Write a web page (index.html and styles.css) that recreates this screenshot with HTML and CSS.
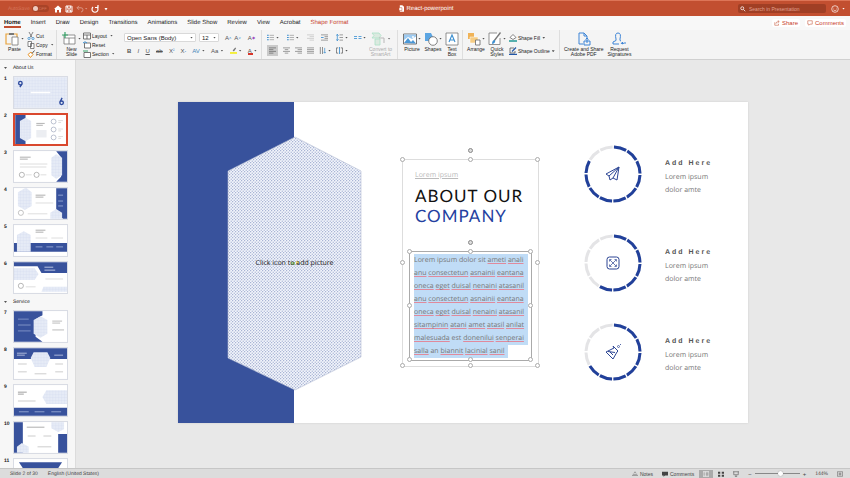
FILE: index.html
```html
<!DOCTYPE html>
<html lang="en">
<head>
<meta charset="utf-8">
<title>React-powerpoint</title>
<link rel="stylesheet" href="styles.css">
</head>
<body>
<svg class="defs" aria-hidden="true">
  <defs>
    <pattern id="dots" width="3" height="3" patternUnits="userSpaceOnUse"><rect width="3" height="3" fill="#f3f6fc"/><circle cx=".7" cy=".7" r=".6" fill="#8f9dc6"/><circle cx="2.2" cy="2.2" r=".6" fill="#8f9dc6"/></pattern>
    <pattern id="soft" width="3" height="3" patternUnits="userSpaceOnUse"><rect width="3" height="3" fill="#e6ebf6"/><path d="M0 0H3M0 0V3" stroke="#d2daec" stroke-width=".6"/></pattern>
    <symbol id="list" viewBox="0 0 8 8"><path d="M0 1.5h2M0 4h2M0 6.5h2" stroke="#3c8fd0" stroke-width="1.2"/><path d="M3 1.5h5M3 4h5M3 6.5h5" stroke="#888" stroke-width=".7"/></symbol>
    <symbol id="alignl" viewBox="0 0 8 8"><path d="M0 1h8M0 3h5M0 5h8M0 7h5" stroke="#666" stroke-width=".8"/></symbol>
    <symbol id="alignc" viewBox="0 0 8 8"><path d="M0 1h8M2 3h4M0 5h8M2 7h4" stroke="#777" stroke-width=".8"/></symbol>
    <symbol id="alignr" viewBox="0 0 8 8"><path d="M0 1h8M3 3h5M0 5h8M3 7h5" stroke="#777" stroke-width=".8"/></symbol>
    <symbol id="alignj" viewBox="0 0 8 8"><path d="M0 1h8M0 3h8M0 5h8M0 7h8" stroke="#777" stroke-width=".8"/></symbol>
  </defs>
</svg>

<header class="titlebar">
  <div class="quick">
    <label class="autosave"><span>AutoSave</span><span class="pill"><input type="checkbox" aria-label="AutoSave"><i>OFF</i></span></label>
    <button aria-label="Home"><svg viewBox="0 0 8 8"><path d="M0 4 4 .5 8 4H7v3.5H5V5H3v2.500H1V4z" fill="#fff"/></svg></button>
    <button aria-label="Save"><svg viewBox="0 0 8 8"><path d="M1 1h5.500L7 1.500V7H1zM2.300 1v2.200h3.400V1M2.300 7V5h3.400v2" fill="none" stroke="#fff"/></svg></button>
    <button aria-label="Undo" class="faint"><svg viewBox="0 0 8 8"><path d="M3 .8 1 2.800l2 2M1 2.800h4q2 0 2 2T5 7" fill="none" stroke="#fff"/></svg><b class="caret light"></b></button>
    <button aria-label="Redo"><svg viewBox="0 0 8 8"><path d="M2 2a3 3 0 1 0 4 0M4 2.500h3V0" fill="none" stroke="#fff" stroke-width="1.200"/></svg></button>
    <button aria-label="Customize toolbar"><svg viewBox="0 0 8 8"><path d="M2.500 3h3L4 5.500z" fill="#fff"/></svg></button>
  </div>
  <h1 class="doc"><svg viewBox="0 0 6 8"><path d="M1 0h3l2 2v6H1z" fill="#fff"/><path d="M0 3h3.500v3.500H0z" fill="#fff" stroke="#c24f30" stroke-width=".6"/></svg>React-powerpoint</h1>
  <div class="find">
    <label class="search"><svg viewBox="0 0 8 8"><circle cx="3" cy="3" r="2" fill="none" stroke="#fff"/><path d="m4.500 4.500 2.500 2.500" stroke="#fff"/></svg><input type="text" placeholder="Search in Presentation" aria-label="Search in Presentation"></label>
    <button aria-label="Feedback"><svg viewBox="0 0 8 8"><circle cx="4" cy="4" r="3.300" fill="none" stroke="#fff" stroke-width=".7"/><path d="M2.500 3.200h.6M5 3.200h.6M2.300 4.800q1.700 1.800 3.400 0" fill="none" stroke="#fff" stroke-width=".6"/></svg><b class="caret light"></b></button>
  </div>
</header>

<nav class="tabs">
  <a href="#" class="on">Home</a><a href="#">Insert</a><a href="#">Draw</a><a href="#">Design</a><a href="#">Transitions</a><a href="#">Animations</a><a href="#">Slide Show</a><a href="#">Review</a><a href="#">View</a><a href="#">Acrobat</a><a href="#" class="ctx">Shape Format</a>
  <div class="collab">
    <button><svg viewBox="0 0 8 8"><path d="M1 3v4h5V5M2.500 5q0-3 4-3M5 .5 7 2 5 3.800" fill="none" stroke="#c24f30" stroke-width=".7"/></svg>Share</button>
    <button><svg viewBox="0 0 8 8"><path d="M1 1h6v4.500H4L2.500 7V5.500H1z" fill="none" stroke="#c24f30" stroke-width=".7"/></svg>Comments</button>
  </div>
</nav>

<div class="ribbon">
  <section class="group clip">
    <button class="big"><span class="ico"><svg viewBox="0 0 14 14"><path d="M5 2H1v10h5M9 2h3v3" fill="none" stroke="#e8a33c" stroke-width="1.200"/><path d="M4 1h5v2H4z" fill="#777"/><path d="M7 5h6v8H7z" fill="#fff" stroke="#777" stroke-width=".8"/></svg><b class="caret"></b></span>Paste</button>
    <div class="stack">
      <button><svg viewBox="0 0 8 8"><path d="m2 0 3 5.500M6 0 3 5.500" stroke="#555" stroke-width=".7"/><circle cx="2" cy="6.500" r="1.100" fill="none" stroke="#3c8fd0" stroke-width=".8"/><circle cx="6" cy="6.500" r="1.100" fill="none" stroke="#3c8fd0" stroke-width=".8"/></svg>Cut</button>
      <button><svg viewBox="0 0 8 8"><path d="M1 .5h3.500v5H1zM3.500 2.500H7v5H3.500z" fill="#fff" stroke="#555" stroke-width=".7"/></svg>Copy<b class="caret"></b></button>
      <button><svg viewBox="0 0 8 8"><path d="M1 4.500 4 2l2 2.500L3.500 7.500z" fill="#fff" stroke="#e8962c"/><path d="m5 3.500 2.500-3" stroke="#555"/></svg>Format</button>
    </div>
  </section>
  <section class="group slides">
    <button class="big"><span class="ico"><svg viewBox="0 0 14 14"><path d="M2 3h11v9H2zM2 6h11M7 6v6" fill="#fff" stroke="#777" stroke-width=".8"/><path d="M3 0v6M0 3h6" stroke="#38a56a" stroke-width="1.200"/></svg><b class="caret"></b></span>New<br>Slide</button>
    <div class="stack">
      <button><svg viewBox="0 0 8 8"><path d="M.5 1h7v6h-7zM.5 3h7M4 3v4" fill="#fff" stroke="#555" stroke-width=".8"/></svg>Layout<b class="caret"></b></button>
      <button><svg viewBox="0 0 8 8"><path d="M1.500 2h6v5h-6z" fill="#fff" stroke="#555" stroke-width=".8"/><path d="M0 2q2-2.500 4 0" fill="none" stroke="#3c8fd0"/></svg>Reset</button>
      <button><svg viewBox="0 0 8 8"><path d="M1 2.500h6.500v5H1z" fill="#fff" stroke="#555" stroke-width=".8"/><path d="M0 1h5" stroke="#38a56a"/></svg>Section<b class="caret"></b></button>
    </div>
  </section>
  <section class="group font">
    <div class="row">
      <span class="pick family"><select aria-label="Font"><option>Open Sans (Body)</option></select><b class="caret"></b></span>
      <span class="pick size"><select aria-label="Font size"><option>12</option></select><b class="caret"></b></span>
      <button class="t" aria-label="Increase font size">A<sup>˄</sup></button><button class="t" aria-label="Decrease font size">A<sup>˅</sup></button>
      <button class="t last" aria-label="Clear formatting">A<i class="purple">◆</i></button>
    </div>
    <div class="row fmt">
      <button class="t"><strong>B</strong></button><button class="t"><em>I</em></button><button class="t"><u>U</u></button><button class="t"><s>ab</s></button><button class="t">X<sup>²</sup></button><button class="t">X<sub>₂</sub></button><button class="t blue">AV<b class="caret"></b></button><button class="t">Aa<b class="caret"></b></button>
      <button class="t" aria-label="Highlight"><svg viewBox="0 0 8 8"><path d="m3 4 3-3.500 1 1L4.500 5z" fill="#777"/><path d="M0 6.800h8" stroke="#f4ee2a" stroke-width="2"/></svg><b class="caret"></b></button><button class="t under">A<b class="caret"></b></button>
    </div>
  </section>
  <section class="group para">
    <div class="rows">
      <div class="row">
        <button aria-label="Bullets"><svg><use href="#list"/></svg><b class="caret"></b></button>
        <button aria-label="Numbering"><svg><use href="#list"/></svg><b class="caret"></b></button>
        <button class="faint" aria-label="Decrease indent"><svg><use href="#alignr"/></svg></button>
        <button aria-label="Increase indent"><svg viewBox="0 0 8 8"><path d="M0 1h8M4 3h4M4 5h4M0 7h8" stroke="#777" stroke-width=".8"/><path d="M0 4h3" stroke="#3c8fd0"/></svg></button>
        <button aria-label="Line spacing"><svg viewBox="0 0 8 8"><path d="M1.500 0v8M0 2 1.500.5 3 2M0 6l1.500 1.500L3 6" fill="none" stroke="#3c8fd0" stroke-width=".9"/><path d="M4 1h4M4 4h4M4 7h4" stroke="#777" stroke-width=".8"/></svg><b class="caret"></b></button>
      </div>
      <div class="row">
        <button class="active" aria-label="Align left"><svg><use href="#alignl"/></svg></button>
        <button aria-label="Center"><svg><use href="#alignc"/></svg></button>
        <button aria-label="Align right"><svg><use href="#alignr"/></svg></button>
        <button aria-label="Justify"><svg><use href="#alignj"/></svg></button>
        <button aria-label="Text direction"><svg viewBox="0 0 8 8"><path d="M1.500 0v8M4 0v8" stroke="#666" stroke-width=".8"/><path d="M6.500 1v6M5 5.500 6.500 7 8 5.500" fill="none" stroke="#3c8fd0" stroke-width=".8"/></svg><b class="caret"></b></button>
        <button aria-label="Align text"><svg viewBox="0 0 8 8"><path d="M2.500 1H.5v6h2M5.500 1h2v6h-2" fill="none" stroke="#555" stroke-width=".8"/><path d="M4 0v8" stroke="#3c8fd0"/></svg><b class="caret"></b></button>
      </div>
    </div>
    <button class="columns" aria-label="Columns"><svg viewBox="0 0 8 8"><path d="M0 2.500h3M0 4.500h3M4.500 2.500h3M4.500 4.500h3" stroke="#5da3da"/></svg><b class="caret"></b></button>
    <button class="big off"><span class="ico"><svg viewBox="0 0 14 14"><path d="M1 1h7l2 2.500L8 6H1l2-2.500zM4 7h5v6H4z" fill="#d6e8dc" stroke="#9db" stroke-width=".8"/><path d="M8 6h5v5" fill="none" stroke="#aaa"/></svg><b class="caret"></b></span>Convert to<br>SmartArt</button>
  </section>
  <section class="group insert">
    <button class="big"><span class="ico"><svg viewBox="0 0 14 14"><path d="M.5 2h13v10H.5z" fill="#fff" stroke="#555" stroke-width=".8"/><path d="m1 11 4-5 3 4 2-2 3 3.500z" fill="#4a97d6"/><path d="M1 2.500h12v2L9 7 5 5 1 8z" fill="#9dcaf0"/><circle cx="10" cy="5" r="1" fill="#fff"/></svg><b class="caret"></b></span>Picture</button>
    <button class="big"><span class="ico"><svg viewBox="0 0 14 14"><path d="M1 1h6l2 4-2 4H1z" fill="#5ba5e2"/><circle cx="9" cy="9" r="4.300" fill="#fff" stroke="#666" stroke-width=".8"/></svg><b class="caret"></b></span>Shapes</button>
    <button class="big"><span class="ico"><svg viewBox="0 0 14 14"><path d="M1 1h12v12H1z" fill="#fff" stroke="#666" stroke-width=".7"/><path d="m4 10 3-7 3 7M5 8h4" fill="none" stroke="#3c8fd0" stroke-width="1.100"/></svg></span>Text<br>Box</button>
  </section>
  <section class="group draw">
    <button class="big"><span class="ico"><svg viewBox="0 0 14 14"><path d="M1 1h6v6H1z" fill="#f0b357"/><path d="M3 5h8v6H3z" fill="#f6cd84" stroke="#fff" stroke-width=".5"/><path d="M8.500 8H13v5H8.500z" fill="#fff" stroke="#666" stroke-width=".8"/></svg><b class="caret"></b></span>Arrange</button>
    <button class="big"><span class="ico"><svg viewBox="0 0 14 14"><path d="M12 6v6.500H1V1h8" fill="#fff" stroke="#777" stroke-width=".8"/><path d="m6 9 6.500-8.500" stroke="#777" stroke-width="1.300"/><path d="M4 12q0-4 3-4 1 3-3 4" fill="#3c8fd0"/></svg><b class="caret"></b></span>Quick<br>Styles</button>
    <div class="stack two">
      <button><svg viewBox="0 0 8 8"><path d="m1 3.500 3-3 3 3-3 2z" fill="#fff" stroke="#555" stroke-width=".7"/><path d="M0 7h8" stroke="#2f9e9b" stroke-width="1.600"/></svg>Shape Fill<b class="caret"></b></button>
      <button><svg viewBox="0 0 8 8"><path d="M5 1H1v5h5V4" fill="none" stroke="#555" stroke-width=".8"/><path d="m3 4.500 4-4M0 7.300h8" stroke="#2357a8" stroke-width="1.200"/></svg>Shape Outline<b class="caret"></b></button>
    </div>
  </section>
  <section class="group adobe">
    <button class="big"><span class="ico"><svg viewBox="0 0 14 14"><path d="M6 12H2V1h5l3 3v3M7 1v3h3M7 9h6v4H7zM10 11V6M8.500 7.500 10 6l1.500 1.500" fill="none" stroke="#3d84d6"/></svg></span>Create and Share<br>Adobe PDF</button>
    <button class="big"><span class="ico"><svg viewBox="0 0 14 14"><path d="M1 12v-2l3-1.500V7Q2.500 1 6 1t2 6v1.500L9 9M1 12h6M9 12l1.500-2v2l1.500-1h2" fill="none" stroke="#3d84d6"/></svg></span>Request<br>Signatures</button>
  </section>
</div>

<main class="work">
  <aside class="panel">
    <h2><b class="caret"></b>About Us</h2>
    <ol>
      <li><svg viewBox="0 0 54 31"><rect width="54" height="31" fill="url(#soft)"/><path d="M17 15.500h20" stroke="#fff" stroke-width="1.500"/><circle cx="6.500" cy="6" r="1.800" fill="none" stroke="#2c4a9e" stroke-width="1.400"/><path d="M8 7 6 10" stroke="#2c4a9e" stroke-width="1.400"/><circle cx="48.500" cy="26" r="1.800" fill="none" stroke="#2c4a9e" stroke-width="1.400"/><path d="m47 25 2-4" stroke="#2c4a9e" stroke-width="1.400"/></svg></li>
      <li class="current"><svg viewBox="0 0 54 31"><rect width="54" height="31" fill="#fff"/><path d="M0 0h11v31H0z" fill="#38529c"/><path d="m11 3 6 3.500v18L11 28l-6-3.500v-18z" fill="url(#soft)"/><path d="M22.500 9h9M22.500 11h7" stroke="#999" stroke-width=".8"/><path d="M22.500 16h11v8h-11z" fill="#eceef2"/><g fill="none" stroke="#9aa3b8" stroke-width=".7"><circle cx="41" cy="7" r="2.600"/><circle cx="41" cy="15.500" r="2.600"/><circle cx="41" cy="24" r="2.600"/><path d="M46 6h5M46 8h3M46 15h5M46 17h3M46 23h5M46 25h3" stroke="#ccc"/></g></svg></li>
      <li><svg viewBox="0 0 54 31"><rect width="54" height="31" fill="#fff"/><path d="M43 0h11v31H43l5-5V6z" fill="#38529c"/><path d="m43 3 6 3.500v18L43 28l-5-3.500v-18z" fill="url(#soft)"/><path d="M6 6h11M6 8h8" stroke="#999" stroke-width=".8"/><path d="M6 13h28M6 16h27" stroke="#ddd"/><g fill="none" stroke="#999" stroke-width=".7"><circle cx="8" cy="24" r="2.600"/><circle cx="23" cy="24" r="2.600"/></g><path d="M12 24h6M27 24h6" stroke="#ddd"/></svg></li>
      <li><svg viewBox="0 0 54 31"><rect width="54" height="31" fill="#fff"/><path d="m4 4 7-4h2l5 4v14l-7 4-7-4z" fill="url(#soft)"/><path d="M43 0h11v31h-4l-7-6z" fill="#38529c"/><path d="m37 25 6-4 6 4v6H37z" fill="url(#soft)"/><path d="M22 7h10M22 9h8" stroke="#999" stroke-width=".8"/><path d="M22 15h18M14 26h20" stroke="#ddd"/><path d="M45 7h5M45 13h5M45 18h5" stroke="#8fa1d0"/><circle cx="7" cy="25" r="2.600" fill="none" stroke="#aaa" stroke-width=".7"/></svg></li>
      <li><svg viewBox="0 0 54 31"><rect width="54" height="31" fill="#fff"/><path d="M0 18h54v9H0z" fill="#38529c"/><path d="m3 10 7-4 7 4v17H3z" fill="url(#soft)"/><path d="M22 5h10M22 7h8" stroke="#999" stroke-width=".8"/><path d="M22 13h12M38 13h12" stroke="#ddd"/><path d="M22 22h7M33 22h7M43 22h7" stroke="#8fa1d0"/></svg></li>
      <li><svg viewBox="0 0 54 31"><rect width="54" height="31" fill="#fff"/><path d="M0 0h54v11H28l-4-7H0z" fill="#38529c"/><path d="M0 6h21l4 6-4 6H0z" fill="url(#soft)"/><path d="M30 25h24v5H28z" fill="url(#soft)"/><path d="M31 5h9M31 8h11" stroke="#dbe2f4" stroke-width=".8"/><path d="M32 17h18M12 25h10" stroke="#ddd"/><circle cx="7" cy="24" r="2.600" fill="none" stroke="#999" stroke-width=".7"/></svg></li>
    </ol>
    <h2><b class="caret"></b>Service</h2>
    <ol start="7">
      <li><svg viewBox="0 0 54 31"><rect width="54" height="31" fill="#fff"/><path d="M0 0h29v4l-7 4v18l7 5H0z" fill="#38529c"/><path d="m27 5 7 4v14l-7 4-7-4V9z" fill="url(#soft)"/><path d="M4 8h11M4 14h13M4 20h13" stroke="#8fa1d0" stroke-width=".8"/><path d="M39 10h10M39 12h8M39 19h12" stroke="#aaa" stroke-width=".8"/></svg></li>
      <li><svg viewBox="0 0 54 31"><rect width="54" height="31" fill="#fff"/><path d="M0 0h54v11H0z" fill="#38529c"/><path d="m17 10 3-6h14l3 6-4 9H21z" fill="url(#soft)"/><path d="M3 5h10M3 7h8M41 7h9" stroke="#c9d3ea" stroke-width=".8"/><path d="M4 16h9M4 24h9M21 26h12M42 16h8M42 24h8" stroke="#ccc"/></svg></li>
      <li><svg viewBox="0 0 54 31"><rect width="54" height="31" fill="#fff"/><path d="M0 23h54v8H0z" fill="#38529c"/><path d="m29 12 4-7h21v14H33z" fill="url(#soft)"/><path d="M4 7h9M4 9h6" stroke="#888" stroke-width=".8"/><path d="M4 16h18" stroke="#ccc"/><path d="M5 27h10M21 27h10M38 27h10" stroke="#8fa1d0"/></svg></li>
      <li><svg viewBox="0 0 54 31"><rect width="54" height="31" fill="#fff"/><path d="M0 0h9v31H0zM45 12h9v19h-9z" fill="#38529c"/><path d="m3 25 5-4 7 4v6H3zM38 0h13v7l-6 3-7-4z" fill="url(#soft)"/><path d="M13 5h18" stroke="#999" stroke-width=".8"/><path d="M14 14h8M30 14h8M24 25h14" stroke="#ccc"/></svg></li>
      <li><svg viewBox="0 0 54 31"><rect width="54" height="31" fill="#fff"/><path d="M5 3h44l-4 6H9z" fill="#38529c"/></svg></li>
    </ol>
  </aside>

  <div class="canvas">
    <article class="slide">
      <svg class="art" viewBox="0 0 570 321"><path d="M0 0h116v321H0z" fill="#38529c"/><path d="m117 35 66 34v186l-66 33-67-32V69z" fill="url(#dots)" stroke="#b5bdd4" stroke-width=".6"/><path d="M113 160h4v3h-4z" fill="#a6d48f"/><path d="M118 159h3v3h-3z" fill="#e9dc82"/></svg>
      <p class="hint">Click icon to add picture</p>
      <div class="frame outer">
        <i class="rot"></i><i class="h tl"></i><i class="h tc"></i><i class="h tr"></i><i class="h ml"></i><i class="h mr"></i><i class="h bl"></i><i class="h bc"></i><i class="h br"></i>
        <p class="lead">Lorem ipsum</p>
        <h3>ABOUT OUR<br><span>COMPANY</span></h3>
        <div class="frame inner">
          <i class="rot"></i><i class="h tl"></i><i class="h tc"></i><i class="h tr"></i><i class="h ml"></i><i class="h mr"></i><i class="h bl"></i><i class="h bc"></i><i class="h br"></i>
          <p class="copy"><span>Lorem ipsum dolor sit <u>ameti</u> <u>anali</u></span><span><u>anu</u> <u>consectetun</u> <u>asnainii</u> <u>eantana</u></span><span><u>oneca</u> <u>eget</u> <u>duisal</u> <u>nenaini</u> <u>atasanil</u></span><span><u>anu</u> <u>consectetun</u> <u>asnainii</u> <u>eantana</u></span><span><u>oneca</u> <u>eget</u> <u>duisal</u> <u>nenaini</u> <u>atasanil</u></span><span><u>sitampinin</u> <u>atani</u> <u>amet</u> <u>atasil</u> <u>anilat</u></span><span><u>malesuada</u> est <u>donenilui</u> <u>senperai</u></span><span class="end"><u>salla</u> an <u>biannit</u> <u>lacinial</u> <u>sanil</u></span></p>
        </div>
      </div>
      <div class="features">
        <section><svg viewBox="0 0 58 58"><g fill="none" stroke-width="3" transform="rotate(-88 29 29)"><circle cx="29" cy="29" r="27" pathLength="120" stroke="#e4e4e6" stroke-dasharray="9 1"/><circle cx="29" cy="29" r="27" pathLength="120" stroke="#21409a" stroke-dasharray="9 1 9 1 9 1 9 1 9 1 9 1 9 1 9 1 9 1 9 1 0 20"/></g><path d="m22 29 13-7-2 13-4-2-3 2-1-4zM35 22l-10 9M35 22l-6 11" fill="none" stroke="#2c4594" stroke-linejoin="round"/></svg><div><h4>Add Here</h4><p>Lorem ipsum<br>dolor amte</p></div></section>
        <section><svg viewBox="0 0 58 58"><g fill="none" stroke-width="3" transform="rotate(-88 29 29)"><circle cx="29" cy="29" r="27" pathLength="120" stroke="#e4e4e6" stroke-dasharray="9 1"/><circle cx="29" cy="29" r="27" pathLength="120" stroke="#21409a" stroke-dasharray="9 1 9 1 9 1 9 1 9 1 9 1 9 1 0 50"/></g><rect x="23" y="23" width="12" height="12" rx="2.500" fill="none" stroke="#2c4594"/><path d="m26 26 6 6M32 26l-6 6M25.500 27.500v-2h2M30.500 25.500h2v2M25.500 30.500v2h2M30.500 32.500h2v-2" fill="none" stroke="#2c4594" stroke-width=".7"/></svg><div><h4>Add Here</h4><p>Lorem ipsum<br>dolor amte</p></div></section>
        <section><svg viewBox="0 0 58 58"><g fill="none" stroke-width="3" transform="rotate(-88 29 29)"><circle cx="29" cy="29" r="27" pathLength="120" stroke="#e4e4e6" stroke-dasharray="9 1"/><circle cx="29" cy="29" r="27" pathLength="120" stroke="#21409a" stroke-dasharray="9 1 9 1 9 1 9 1 9 1 9 1 9 1 9 1 0 40"/></g><path d="m29 23 5 5-1 1-4 7-7-7 8-4zM24 28.500l7 1M26 29l3 3" fill="none" stroke="#2c4594" stroke-linejoin="round"/><circle cx="34.500" cy="23.500" r="1" fill="none" stroke="#2c4594" stroke-width=".7"/><path d="M36 21.500h.8" stroke="#2c4594"/></svg><div><h4>Add Here</h4><p>Lorem ipsum<br>dolor amte</p></div></section>
      </div>
    </article>
  </div>
</main>

<footer class="status">
  <span>Slide 2 of 30</span><span>English (United States)</span>
  <div class="views">
    <button><svg viewBox="0 0 8 8"><path d="M0 6h8M1 4.500h6M2.500 3 4 1l1.500 2" fill="none" stroke="#666" stroke-width=".7"/></svg>Notes</button>
    <button><svg viewBox="0 0 8 8"><path d="M0 1h8v5H4L2 7.500V6H0z" fill="#444"/></svg>Comments</button>
    <button class="view active" aria-label="Normal view"><svg viewBox="0 0 8 8"><path d="M0 1h8v6H0zM3 1v6" fill="none" stroke="#fff" stroke-width=".9"/></svg></button>
    <button class="view" aria-label="Slide sorter"><svg viewBox="0 0 8 8"><path d="M0 1h3v2.500H0zM5 1h3v2.500H5zM0 5h3v2.500H0zM5 5h3v2.500H5z" fill="#444"/></svg></button>
    <button class="view" aria-label="Slide show"><svg viewBox="0 0 8 8"><path d="M0 1h8M1 1v4h6V1M4 5v2M2.500 7.500h3" fill="none" stroke="#555" stroke-width=".8"/></svg></button>
    <div class="zoom"><button aria-label="Zoom out">−</button><input type="range" min="0" max="100" value="58" aria-label="Zoom"><button aria-label="Zoom in">+</button></div>
    <output>144%</output>
    <button class="fit" aria-label="Fit to window"><svg viewBox="0 0 8 8"><path d="M.5 1h7v6h-7z" fill="none" stroke="#555" stroke-width=".7"/><path d="M4 2v4M2 4h4" stroke="#555" stroke-width=".8"/></svg></button>
  </div>
</footer>
</body>
</html>
```

FILE: styles.css
```css
* { box-sizing: border-box; }
html, body { height: 100%; }
body {
  margin: 0;
  display: flex;
  flex-direction: column;
  overflow: hidden;
  background: #e8e8e8;
  color: #222;
  font: 5px/6px "Liberation Sans", sans-serif;
  text-rendering: geometricPrecision;
}
h1, h2, h3, h4, p, ol { margin: 0; padding: 0; font-weight: normal; }
button {
  border: 0;
  padding: 0;
  margin: 0;
  background: none;
  color: inherit;
  font: inherit;
  display: flex;
  align-items: center;
  white-space: nowrap;
}
svg { display: block; flex: none; width: 8px; height: 8px; }
.defs { position: absolute; width: 0; height: 0; }
.faint { opacity: .4; }
.caret {
  flex: none;
  width: 3px;
  height: 2px;
  margin-left: 3px;
  background: #555;
  clip-path: polygon(0 0, 100% 0, 50% 100%);
}
.caret.light { background: #fff; }

/* Title bar */
.titlebar {
  flex: none;
  display: grid;
  grid-template-columns: 1fr auto 1fr;
  align-items: center;
  height: 16px;
  padding: 0 5px 0 8px;
  border-top: 1px solid #dd7557;
  background: #c24f30;
  color: #fff;
}
.quick { display: flex; align-items: center; gap: 3px; }
.quick svg { width: 8px; height: 8px; }
.quick .caret { margin-left: 1px; }
.autosave { display: flex; align-items: center; gap: 2px; margin-right: 2px; color: #d5755a; }
.pill {
  display: flex;
  align-items: center;
  gap: 1px;
  width: 17px;
  height: 7px;
  padding: 0 1px;
  border-radius: 4px;
  background: #a94428;
}
.autosave input {
  appearance: none;
  width: 5px;
  height: 5px;
  margin: 0;
  border-radius: 50%;
  background: #eecabf;
}
.autosave i { font-style: normal; font-size: 4px; }
.doc { display: flex; align-items: center; gap: 2px; font-size: 6px; }
.doc svg { width: 5px; height: 7px; }
.find { display: flex; justify-content: flex-end; align-items: center; gap: 5px; }
.search {
  display: flex;
  align-items: center;
  gap: 3px;
  width: 88px;
  height: 9px;
  padding: 0 2px;
  border-radius: 2px;
  background: #a03f25;
}
.search svg { width: 6px; height: 6px; }
.search input {
  min-width: 0;
  flex: 1;
  border: 0;
  padding: 0;
  background: none;
  color: #fff;
  font: inherit;
}
.search input::placeholder { color: #e0a090; opacity: 1; }

/* Ribbon tabs */
.tabs {
  flex: none;
  display: flex;
  align-items: center;
  gap: 10px;
  height: 14px;
  padding: 0 4px;
  background: #f8f8f8;
  font-size: 6px;
}
.tabs a {
  padding: 2px 0 0;
  border-bottom: 2px solid transparent;
  color: #222;
  text-decoration: none;
}
.tabs .on { border-color: #c24f30; font-weight: bold; }
.tabs .ctx { color: #c8402a; }
.collab { display: flex; gap: 5px; margin-left: auto; color: #c8402a; }
.collab button { gap: 2px; padding: 1px 2px; border-radius: 2px; background: #fff; }
.collab svg { width: 6px; height: 6px; }

/* Ribbon */
.ribbon {
  flex: none;
  display: flex;
  height: 30px;
  border-bottom: 1px solid #d0d0d0;
  background: #f4f4f4;
}
.group { display: flex; flex: none; padding: 1px 0 1px 5px; }
.group + .group { border-left: 1px solid #dedede; }
.big { flex-direction: column; text-align: center; justify-content: flex-start; line-height: 5px; }
.big .ico { display: flex; align-items: center; height: 15px; margin-bottom: 1px; }
.big .ico svg { width: 14px; height: 14px; }
.off { color: #999; opacity: .8; }
.stack { display: flex; flex-direction: column; justify-content: space-around; margin-left: 4px; }
.stack button { gap: 1px; }
.row { display: flex; align-items: center; height: 13px; }
.clip { width: 56px; }
.clip .stack { margin-left: 3px; }
.slides { width: 63px; }
.slides .stack { margin-left: 2px; }
.slides .caret, .clip .caret { margin-left: 2px; }
.font { flex-direction: column; width: 142px; padding-left: 4px; }
.font.group { border-left-color: transparent; }
.pick {
  display: flex;
  align-items: center;
  height: 9px;
  margin-right: 3px;
  padding: 0 2px;
  border: 1px solid #d9d9d9;
  border-radius: 1px;
  background: #fff;
}
.pick select {
  appearance: none;
  min-width: 0;
  flex: 1;
  border: 0;
  padding: 0;
  background: none;
  color: #222;
  font: inherit;
  font-size: 6px;
}
.family { width: 72px; }
.size { width: 20px; }
.row .t { margin-left: 3px; font-size: 6px; color: #555; }
.row .t svg { width: 7px; height: 7px; }
.row .t .caret { margin-left: 2px; }
.row .last { margin-left: 7px; }
.fmt { justify-content: space-between; padding: 0 4px 0 0; }
.t sup, .t sub { font-size: 4px; line-height: 4px; color: #3c8fd0; }
.purple { color: #a050c0; font-size: 4px; font-style: normal; }
.row .blue { color: #4784b8; }
.under { position: relative; }
.under::before {
  content: "";
  position: absolute;
  left: 0;
  bottom: -1px;
  width: 5px;
  height: 2px;
  background: #d8362a;
}
.para { width: 136px; }
.rows { width: 81px; }
.rows .row { justify-content: space-between; }
.rows .caret { margin-left: 2px; }
.rows svg { width: 7px; height: 7px; }
.rows .active { padding: 2px; background: #cacaca; }
.columns { height: 13px; margin: 0 3px 0 6px; }
.columns .caret { margin-left: 1px; }
.insert { gap: 3px; width: 65px; }
.draw { gap: 3px; width: 97px; padding-left: 4px; }
.insert .caret, .draw .caret { margin-left: 1px; }
.draw .stack { margin-left: 0; }
.draw .stack button { gap: 1px; }
.adobe { gap: 4px; padding-left: 4px; }

/* Workspace */
.work { flex: 1; min-height: 0; display: flex; }
.panel {
  flex: none;
  width: 76px;
  overflow: hidden;
  padding-top: 3px;
  border-right: 1px solid #dcdcdc;
  background: #f7f7f7;
}
.panel h2 { display: flex; align-items: center; gap: 6px; height: 10px; padding-left: 1px; font-size: 5px; color: #222; }
.panel ol { list-style: none; padding: 3px 7px 3px 4px; display: grid; gap: 4px; counter-reset: n; }
.panel ol[start="7"] { counter-reset: n 6; }
.panel li { display: grid; grid-template-columns: 9px 56px; counter-increment: n; }
.panel li::before { content: counter(n); font-weight: bold; }
.panel li svg { width: 55px; height: 33px; border: 1px solid #d9dce4; }
.panel .current svg { border: 2px solid #d9482e; }
.canvas {
  flex: 1;
  display: flex;
  align-items: center;
  justify-content: center;
  padding-bottom: 4px;
}

/* Slide: objects sit freely on the artboard */
.slide {
  position: relative;
  flex: none;
  width: 570px;
  height: 321px;
  background: #fff;
  box-shadow: 0 0 2px #ccc;
  color: #777;
  font: 7px/13px "Open Sans", sans-serif;
}
.art { position: absolute; inset: 0; width: 100%; height: 100%; }
.hint { position: absolute; left: 50px; top: 155px; width: 133px; text-align: center; color: #222; }
.frame { position: absolute; border: 1px solid #ddd; }
.outer { left: 224px; top: 57px; width: 137px; height: 208px; padding: 9px 12px; }
.inner { left: 6px; top: 91px; width: 123px; height: 110px; padding: 2px 4px; border-color: #aaa; }
.h {
  position: absolute;
  width: 5px;
  height: 5px;
  margin: -3px;
  border: 1px solid #aaa;
  border-radius: 50%;
  background: #fff;
}
.tl, .ml, .bl { left: 0; }
.tc, .bc { left: 50%; }
.tr, .mr, .br { left: 100%; }
.tl, .tc, .tr { top: 0; }
.ml, .mr { top: 50%; }
.bl, .bc, .br { top: 100%; }
.rot {
  position: absolute;
  left: 50%;
  top: -12px;
  width: 5px;
  height: 5px;
  margin-left: -3px;
  border: 1px solid #888;
  border-radius: 50%;
  background: #ddd;
}
.lead { color: #bbb; text-decoration: underline; }
.slide h3 { margin-top: 4px; color: #111; font: 17px/20px Lato, sans-serif; letter-spacing: 1px; white-space: nowrap; }
.slide h3 span { color: #2541a0; }
.copy { white-space: nowrap; }
.copy span { display: block; width: 114px; background: #c0dcf6; }
.copy .end { width: 94px; }
.copy u { text-decoration: underline #e08a9c; text-underline-offset: 1px; text-decoration-skip-ink: none; }
.features { position: absolute; left: 406px; top: 43px; display: grid; gap: 31px; }
.features section { display: flex; align-items: center; gap: 23px; }
.features svg { width: 58px; height: 58px; }
.features h4 { color: #555; font: bold 7px/14px "Liberation Sans", sans-serif; letter-spacing: 2px; }
.features div { padding-top: 6px; }

/* Status bar */
.status {
  flex: none;
  display: flex;
  align-items: center;
  gap: 10px;
  height: 10px;
  padding: 0 7px 0 10px;
  border-top: 1px solid #c6c6c6;
  background: #dcdcdc;
  color: #444;
}
.views { display: flex; align-items: center; gap: 9px; margin-left: auto; }
.views button { gap: 2px; }
.views svg { width: 6px; height: 6px; }
.views .view { padding: 1px 4px; margin: 0 -4px; }
.views .active { background: #aaa; }
.zoom { display: flex; align-items: center; gap: 3px; font-size: 6px; }
.zoom input { appearance: none; width: 45px; height: 1px; margin: 0; background: #888; }
.zoom input::-webkit-slider-thumb {
  appearance: none;
  width: 5px;
  height: 5px;
  border-radius: 50%;
  background: #fff;
  box-shadow: 0 0 1px #777;
}
```
